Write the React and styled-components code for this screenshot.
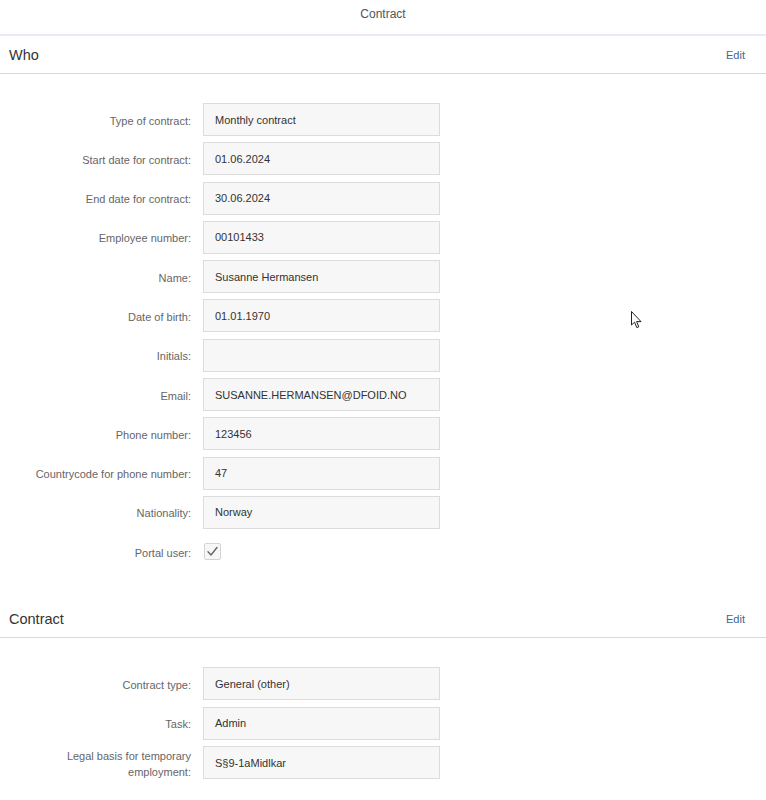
import React from "react";
import styled, { createGlobalStyle } from "styled-components";

const GlobalStyle = createGlobalStyle`
  html, body {
    margin: 0;
    padding: 0;
    background: #ffffff;
  }
  body {
    font-family: "Liberation Sans", Arial, sans-serif;
    color: #333333;
  }
`;

const who = [
  { label: "Type of contract:", value: "Monthly contract" },
  { label: "Start date for contract:", value: "01.06.2024" },
  { label: "End date for contract:", value: "30.06.2024" },
  { label: "Employee number:", value: "00101433" },
  { label: "Name:", value: "Susanne Hermansen" },
  { label: "Date of birth:", value: "01.01.1970" },
  { label: "Initials:", value: "" },
  { label: "Email:", value: "SUSANNE.HERMANSEN@DFOID.NO" },
  { label: "Phone number:", value: "123456" },
  { label: "Countrycode for phone number:", value: "47" },
  { label: "Nationality:", value: "Norway" },
];

const contract = [
  { label: "Contract type:", value: "General (other)" },
  { label: "Task:", value: "Admin" },
  { label: "Legal basis for temporary employment:", value: "S§9-1aMidlkar" },
];

const App = () => {
  return (
    <Page>
      <GlobalStyle />
      <TitleBar>Contract</TitleBar>

      <SectionHeader>
        <SectionTitle>Who</SectionTitle>
        <EditLink>Edit</EditLink>
      </SectionHeader>
      <Form>
        {who.map((f) => (
          <Row key={f.label}>
            <Label>{f.label}</Label>
            <Field>{f.value}</Field>
          </Row>
        ))}
        <Row>
          <Label>Portal user:</Label>
          <Checkbox>
            <svg width="13" height="13" viewBox="0 0 13 13">
              <path
                d="M2 6.8 L5 10 L11 2.5"
                fill="none"
                stroke="#666"
                strokeWidth="1.4"
                strokeLinecap="round"
                strokeLinejoin="round"
              />
            </svg>
          </Checkbox>
        </Row>
      </Form>

      <SectionHeader $spaced>
        <SectionTitle>Contract</SectionTitle>
        <EditLink>Edit</EditLink>
      </SectionHeader>
      <Form>
        {contract.map((f) => (
          <Row key={f.label}>
            <Label>{f.label}</Label>
            <Field>{f.value}</Field>
          </Row>
        ))}
      </Form>

      <Pointer>
        <svg width="12" height="18" viewBox="0 0 12 18">
          <path
            d="M0.5 0.5 L0.5 14 L3.6 11.2 L5.8 16.6 L7.8 15.8 L5.6 10.6 L10 10.6 Z"
            fill="#fff"
            stroke="#222"
            strokeWidth="1"
            strokeLinejoin="round"
          />
        </svg>
      </Pointer>
    </Page>
  );
};

const Page = styled.div`
  position: relative;
  width: 766px;
  min-height: 800px;
`;

const TitleBar = styled.div`
  height: 34px;
  line-height: 29px;
  text-align: center;
  font-size: 12px;
  color: #555;
  border-bottom: 2px solid #e7ecf2;
`;

const SectionHeader = styled.div`
  display: flex;
  align-items: center;
  justify-content: space-between;
  height: 37px;
  padding: 0 21px 0 9px;
  margin-top: ${(p) => (p.$spaced ? "32px" : "0")};
  border-bottom: 1px solid #d9d9d9;
`;

const SectionTitle = styled.div`
  font-size: 14.5px;
  color: #333;
`;

const EditLink = styled.a`
  font-size: 11px;
  color: #3c6690;
  cursor: pointer;
`;

const Form = styled.div`
  display: flex;
  flex-direction: column;
  gap: 6.3px;
  padding-top: 29px;
`;

const Row = styled.div`
  display: flex;
  align-items: center;
  min-height: 33px;
`;

const Label = styled.div`
  width: 176px;
  margin-left: 15px;
  margin-right: 12px;
  padding-top: 2px;
  text-align: right;
  font-size: 11px;
  line-height: 16px;
  color: #666;
`;

const Field = styled.div`
  box-sizing: border-box;
  width: 237px;
  height: 33px;
  padding: 0 11px;
  display: flex;
  align-items: center;
  background: #f7f7f7;
  border: 1px solid #dcdcdc;
  font-size: 11px;
  color: #333;
`;

const Checkbox = styled.div`
  box-sizing: border-box;
  width: 17px;
  height: 17px;
  margin-left: 1px;
  display: flex;
  align-items: center;
  justify-content: center;
  background: #f7f7f7;
  border: 1px solid #d4d4d4;
  border-radius: 2px;
`;

const Pointer = styled.div`
  position: absolute;
  left: 631px;
  top: 311px;
  pointer-events: none;
`;

export default App;
